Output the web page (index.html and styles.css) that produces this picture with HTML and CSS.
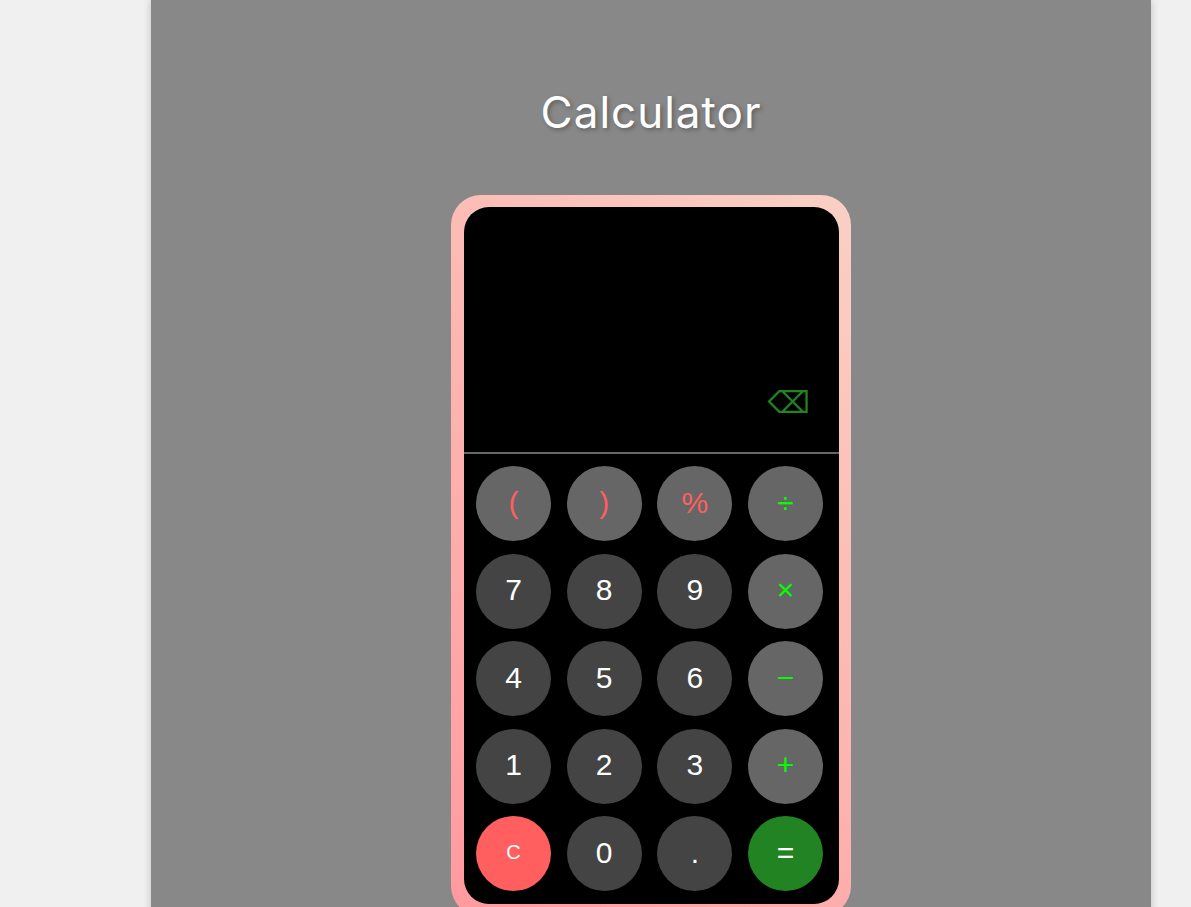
FILE: index.html
```html
<!DOCTYPE html>
<html lang="en">
<head>
<meta charset="utf-8">
<title>Calculator</title>
<meta name="viewport" content="width=device-width, initial-scale=1">
<link rel="stylesheet" href="styles.css">
</head>
<body>
<main class="page">
  <h1 class="title">Calculator</h1>
  <section class="frame">
    <div class="calculator">
      <div class="display">
        <input class="screen" type="text" aria-label="Expression" readonly>
        <button class="backspace" type="button" aria-label="Backspace">⌫</button>
      </div>
      <div class="keys">
        <button class="key bracket" type="button">(</button>
        <button class="key bracket" type="button">)</button>
        <button class="key bracket" type="button">%</button>
        <button class="key operator" type="button">÷</button>
        <button class="key" type="button">7</button>
        <button class="key" type="button">8</button>
        <button class="key" type="button">9</button>
        <button class="key operator" type="button">×</button>
        <button class="key" type="button">4</button>
        <button class="key" type="button">5</button>
        <button class="key" type="button">6</button>
        <button class="key operator" type="button">−</button>
        <button class="key" type="button">1</button>
        <button class="key" type="button">2</button>
        <button class="key" type="button">3</button>
        <button class="key operator" type="button">+</button>
        <button class="key clear" type="button">C</button>
        <button class="key" type="button">0</button>
        <button class="key" type="button">.</button>
        <button class="key equals" type="button">=</button>
      </div>
    </div>
  </section>
</main>
</body>
</html>
```
FILE: styles.css
```css
* {
  box-sizing: border-box;
}

body {
  margin: 0;
  padding-right: 40px;
  background: #f0f0f0;
  font-family: "Liberation Sans", Arial, sans-serif;
}

.page {
  display: flex;
  flex-direction: column;
  align-items: center;
  max-width: 1000px;
  min-height: 100vh;
  margin-left: auto;
  padding: 84px 20px 40px;
  background: #888;
  box-shadow: 0 0 8px rgba(0, 0, 0, 0.2);
}

.title {
  margin: 0 0 55px;
  color: #fff;
  font-family: Inter, sans-serif;
  font-size: 44px;
  font-weight: 400;
  line-height: 56px;
  letter-spacing: 1px;
  text-shadow: 2px 2px 4px rgba(0, 0, 0, 0.3);
}

.frame {
  width: 100%;
  max-width: 400px;
  padding: 12px 12px 12px 13px;
  border-radius: 30px;
  background: linear-gradient(45deg, #ff9a9e 0%, #fad0c4 99%);
}

.calculator {
  border-radius: 25px;
  background: #000;
}

.display {
  display: flex;
  flex-direction: column;
  align-items: flex-end;
  height: 247px;
  padding: 12px 29px 29px 12px;
  border-bottom: 2px solid #666;
}

.screen {
  flex: 1;
  width: 100%;
  border: 0;
  outline: 0;
  background: transparent;
  color: #fff;
  font-size: 40px;
  text-align: right;
}

.backspace {
  padding: 0;
  border: 0;
  background: transparent;
  color: #228322;
  font-family: "DejaVu Sans", sans-serif;
  font-size: 30px;
  line-height: 40px;
  cursor: pointer;
}

.keys {
  display: grid;
  grid-template-columns: repeat(4, 75px);
  justify-content: space-between;
  align-content: space-between;
  height: 450px;
  padding: 12px 16px 13px 12px;
}

.key {
  width: 75px;
  height: 75px;
  padding: 0 0 2px;
  border: 0;
  border-radius: 50%;
  background: #444;
  color: #fff;
  font-family: inherit;
  font-size: 30px;
  cursor: pointer;
}

.bracket {
  background: #666;
  color: #ff5f5f;
}

.operator {
  background: #666;
  color: #0f0;
}

.clear {
  background: #ff5f5f;
  font-size: 20px;
}

.equals {
  background: #228322;
}
```
